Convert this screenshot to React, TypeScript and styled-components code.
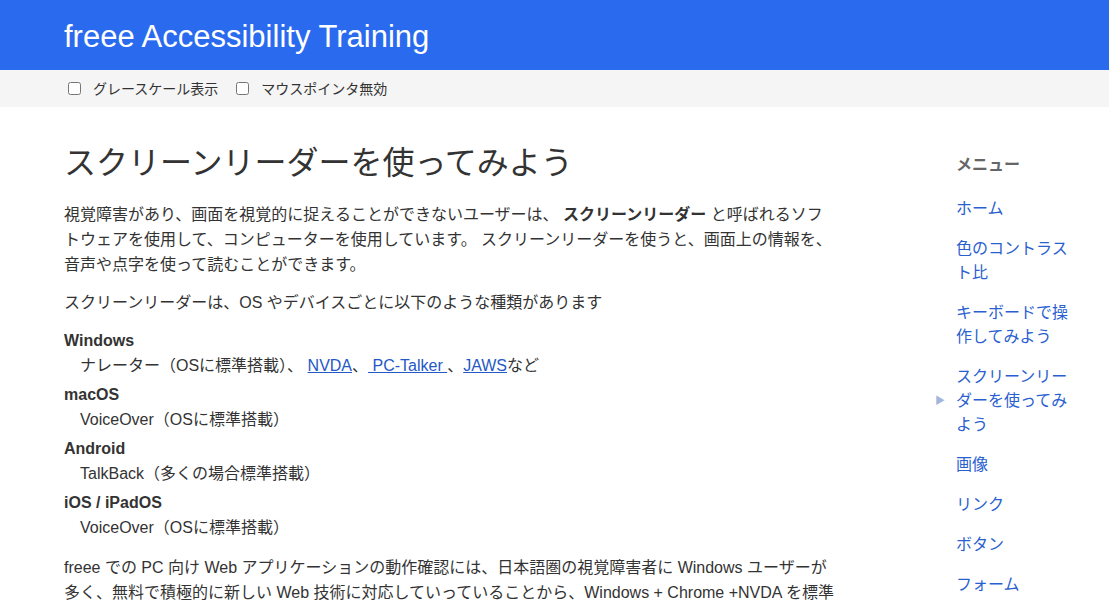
import React from "react";
import styled, { createGlobalStyle } from "styled-components";

const Global = createGlobalStyle`
  html, body { margin: 0; padding: 0; background: #fff; }
  body {
    font-family: "Liberation Sans", "Noto Sans CJK JP", sans-serif;
    color: #333;
  }
  * { box-sizing: border-box; }
`;

const Header = styled.header`
  height: 70px;
  background: #2a6aef;
  display: flex;
  align-items: center;
  padding: 0 64px;
`;

const SiteTitle = styled.div`
  color: #fff;
  font-size: 31px;
  line-height: 1;
  margin-top: 3px;
`;

const Toolbar = styled.div`
  height: 37px;
  background: #f5f5f5;
  display: flex;
  align-items: center;
  gap: 18px;
  padding-left: 68px;
  padding-bottom: 1px;
  font-size: 14px;
  color: #333;
`;

const ToggleLabel = styled.label`
  display: inline-flex;
  align-items: center;
  gap: 12px;
  input {
    margin: 0;
    width: 13px;
    height: 13px;
  }
`;

const Layout = styled.div`
  display: grid;
  grid-template-columns: 771px 120px;
  column-gap: 121px;
  padding: 32px 0 0 64px;
`;

const Main = styled.main`
  font-size: 16px;
  line-height: 25px;
`;

const Heading = styled.h1`
  font-size: 32px;
  font-weight: normal;
  line-height: 48px;
  margin: 0 0 15px;
  color: #333;
`;

const Para = styled.p`
  margin: 0 0 13px;
`;

const OsList = styled.dl`
  margin: 0 0 15px;
`;

const OsName = styled.dt`
  font-weight: bold;
  margin-top: 4px;
  &:first-child { margin-top: 0; }
`;

const OsReaders = styled.dd`
  margin: 0 0 0 16px;
`;

const Link = styled.a`
  color: #2458c6;
  text-decoration: underline;
`;

const Aside = styled.nav`
  font-size: 16px;
  line-height: 24px;
  padding-top: 14px;
`;

const MenuTitle = styled.div`
  font-weight: bold;
  color: #666;
  margin-bottom: 20px;
`;

const MenuList = styled.ul`
  list-style: none;
  margin: 0;
  padding: 0;
  display: flex;
  flex-direction: column;
  gap: 16px;
`;

const MenuItem = styled.li`
  position: relative;
  display: flex;
  align-items: center;
`;

const Marker = styled.span`
  position: absolute;
  left: -21px;
  font-size: 10px;
  color: #a3b5dc;
`;

const MenuLink = styled.a`
  color: #2a5fcf;
  text-decoration: none;
`;

const menu = [
  "ホーム",
  "色のコントラスト比",
  "キーボードで操作してみよう",
  "スクリーンリーダーを使ってみよう",
  "画像",
  "リンク",
  "ボタン",
  "フォーム",
];

export default function App() {
  return (
    <>
      <Global />
      <Header>
        <SiteTitle>freee Accessibility Training</SiteTitle>
      </Header>
      <Toolbar>
        <ToggleLabel>
          <input type="checkbox" />
          グレースケール表示
        </ToggleLabel>
        <ToggleLabel>
          <input type="checkbox" />
          マウスポインタ無効
        </ToggleLabel>
      </Toolbar>
      <Layout>
        <Main>
          <Heading>スクリーンリーダーを使ってみよう</Heading>
          <Para>
            視覚障害があり、画面を視覚的に捉えることができないユーザーは、 <strong>スクリーンリーダー</strong> と呼ばれるソフトウェアを使用して、コンピューターを使用しています。 スクリーンリーダーを使うと、画面上の情報を、音声や点字を使って読むことができます。
          </Para>
          <Para>スクリーンリーダーは、OS やデバイスごとに以下のような種類があります</Para>
          <OsList>
            <OsName>Windows</OsName>
            <OsReaders>
              ナレーター（OSに標準搭載）、 <Link href="#">NVDA</Link>、<Link href="#"> PC-Talker </Link>、<Link href="#">JAWS</Link>など
            </OsReaders>
            <OsName>macOS</OsName>
            <OsReaders>VoiceOver（OSに標準搭載）</OsReaders>
            <OsName>Android</OsName>
            <OsReaders>TalkBack（多くの場合標準搭載）</OsReaders>
            <OsName>iOS / iPadOS</OsName>
            <OsReaders>VoiceOver（OSに標準搭載）</OsReaders>
          </OsList>
          <Para>
            freee での PC 向け Web アプリケーションの動作確認には、日本語圏の視覚障害者に Windows ユーザーが多く、無料で積極的に新しい Web 技術に対応していっていることから、Windows + Chrome +NVDA を標準の環境としています。
          </Para>
        </Main>
        <Aside>
          <MenuTitle>メニュー</MenuTitle>
          <MenuList>
            {menu.map((m, i) => (
              <MenuItem key={m}>
                {i === 3 && <Marker>▶</Marker>}
                <MenuLink href="#">{m}</MenuLink>
              </MenuItem>
            ))}
          </MenuList>
        </Aside>
      </Layout>
    </>
  );
}
